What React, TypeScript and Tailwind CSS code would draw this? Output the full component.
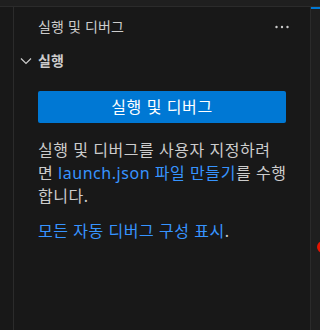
import React from "react";

export default function App() {
  const font = { fontFamily: '"Noto Sans", "Noto Sans CJK KR", sans-serif' };
  return (
    <div className="w-[320px] h-[330px] bg-[#181818] flex flex-col overflow-hidden text-[#cccccc]" style={font}>
      <div className="h-[7px] bg-[#1f1f1f] border-b border-[#2b2b2b] shrink-0" />
      <div className="flex flex-1 min-h-0">
        <div className="w-[14px] border-r border-[#2b2b2b] bg-[#181818] shrink-0" />
        <div className="flex-1 flex flex-col min-w-0">
          <div className="h-[41px] flex items-start pt-[12px] pl-[24px] pr-[20px] justify-between shrink-0">
            <span className="text-[14px] leading-[16px] tracking-[0.2px] text-[#cccccc]">실행 및 디버그</span>
            <svg width="16" height="16" viewBox="0 0 16 16" fill="#cccccc">
              <circle cx="2.5" cy="8" r="1.2" />
              <circle cx="8" cy="8" r="1.2" />
              <circle cx="13.5" cy="8" r="1.2" />
            </svg>
          </div>
          <div className="h-[26px] flex items-center pl-[6px] shrink-0">
            <svg width="12" height="8" viewBox="0 0 12 8" fill="none" stroke="#cccccc" strokeWidth="1.2" className="mr-[6px]">
              <path d="M1 1.5 L6 6.5 L11 1.5" />
            </svg>
            <span className="text-[14px] font-bold leading-[16px] text-[#cccccc]">실행</span>
          </div>
          <div className="pl-[24px] pr-[24px] pt-[17px]">
            <button className="w-[248px] h-[32px] rounded-[2px] bg-[#0078d4] text-white text-[16px] tracking-[0.6px] flex items-center justify-center">
              실행 및 디버그
            </button>
            <p className="mt-[16px] text-[16px] leading-[23px] tracking-[0.55px] text-[#cccccc] whitespace-nowrap">
              실행 및 디버그를 사용자 지정하려
              <br />면 <span className="text-[#3794ff]">launch.json 파일 만들기</span>를 수행
              <br />합니다.
            </p>
            <p className="mt-[12px] text-[16px] leading-[23px] tracking-[0.55px] text-[#cccccc] whitespace-nowrap">
              <span className="text-[#3794ff]">모든 자동 디버그 구성 표시</span>.
            </p>
          </div>
        </div>
        <div className="w-[10px] border-l border-[#2b2b2b] bg-[#1f1f1f] shrink-0 relative">
          <div className="h-[2px] bg-[#0078d4]" />
          <div className="absolute left-[6px] top-[234px] w-[12px] h-[12px] rounded-full bg-[#e51400]" />
        </div>
      </div>
    </div>
  );
}
